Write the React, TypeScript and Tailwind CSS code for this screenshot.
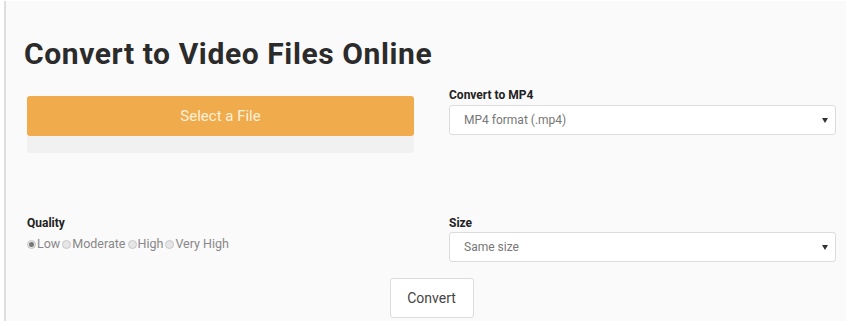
import React from 'react';

const Caret = () => (
  <svg width="6" height="5" viewBox="0 0 6 5" className="text-[#333]">
    <path d="M0 0 H6 L3 5 Z" fill="currentColor" />
  </svg>
);

const SelectBox = ({ value }: { value: string }) => (
  <div className="flex h-[30px] w-[387px] items-center justify-between rounded-[3px] border border-[#dcdcdc] bg-white pl-[14px] pr-[7px] text-[12px] text-[#777]">
    <span>{value}</span>
    <Caret />
  </div>
);

const Radio = ({ label, checked }: { label: string; checked?: boolean }) => (
  <label className="flex items-center">
    <span className="flex h-[9px] w-[9px] items-center justify-center rounded-full border border-[#c8c8c8] bg-[#e6e6e6]">
      {checked && <span className="h-[5px] w-[5px] rounded-full bg-[#777]" />}
    </span>
    <span className="ml-[1px]">{label}</span>
  </label>
);

export default function App() {
  return (
    <div
      className="h-[326px] w-[850px] bg-white pt-[1px]"
      style={{ fontFamily: 'Roboto, "Liberation Sans", sans-serif' }}
    >
      <div className="ml-[4px] h-[320px] w-[842px] border-l-2 border-[#dedede] bg-[#fafafa] pl-[21px]">
        <h1 className="-ml-[3px] pt-[33px] text-[30px] font-bold leading-[40px] tracking-[0.6px] text-[#2b2b2b]">
          Convert to Video Files Online
        </h1>

        <div className="mt-[15px] flex gap-[35px]">
          <div className="w-[387px] pt-[7px]">
            <button className="flex h-[40px] w-full items-center justify-center rounded-[3px] bg-[#f0ab4c] text-[15px] text-[#fdf1dc]">
              Select a File
            </button>
            <div className="h-[17px] w-full rounded-b-[3px] bg-[#f1f1f1]" />
          </div>
          <div className="w-[387px]">
            <div className="mb-[4px] h-[12px] text-[12px] font-bold leading-[12px] text-[#222]">Convert to MP4</div>
            <SelectBox value="MP4 format (.mp4)" />
          </div>
        </div>

        <div className="mt-[64px] flex gap-[35px]">
          <div className="w-[387px]">
            <div className="h-[12px] text-[12px] font-bold leading-[12px] text-[#222]">Quality</div>
            <div className="mt-[6px] flex gap-[2px] text-[12.5px] text-[#888]">
              <Radio label="Low" checked />
              <Radio label="Moderate" />
              <Radio label="High" />
              <Radio label="Very High" />
            </div>
          </div>
          <div className="w-[387px]">
            <div className="mb-[3px] h-[12px] text-[12px] font-bold leading-[12px] text-[#222]">Size</div>
            <SelectBox value="Same size" />
          </div>
        </div>

        <div className="mt-[16px] flex justify-center pr-[10px]">
          <button className="h-[40px] w-[84px] rounded-[3px] border border-[#dcdcdc] bg-white text-[14px] text-[#444]">
            Convert
          </button>
        </div>
      </div>
    </div>
  );
}
